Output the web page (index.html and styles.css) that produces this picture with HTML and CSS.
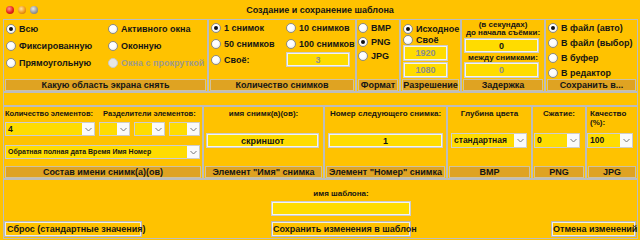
FILE: index.html
```html
<!DOCTYPE html>
<html lang="ru">
<head>
  <meta charset="UTF-8">
  <title>Создание и сохранение шаблона</title>
  <link rel="stylesheet" href="styles.css">
</head>
<body>
  <div class="titlebar">
    <div class="lights">
      <span class="light red"></span>
      <span class="light amber"></span>
      <span class="light grey"></span>
    </div>
    <div class="title">Создание и сохранение шаблона</div>
  </div>

  <!-- верхний ряд: что снимать -->
  <div class="row">
    <div class="box area">
      <div class="body">
        <label class="opt"><span class="radio on"></span>Всю</label>
        <label class="opt"><span class="radio"></span>Активного окна</label>
        <label class="opt"><span class="radio"></span>Фиксированную</label>
        <label class="opt"><span class="radio"></span>Оконную</label>
        <label class="opt"><span class="radio"></span>Прямоугольную</label>
        <label class="opt off"><span class="radio"></span>Окна с прокруткой</label>
      </div>
      <div class="cap">Какую область экрана снять</div>
    </div>

    <div class="box count">
      <div class="body">
        <label class="opt"><span class="radio on"></span>1 снимок</label>
        <label class="opt"><span class="radio"></span>10 снимков</label>
        <label class="opt"><span class="radio"></span>50 снимков</label>
        <label class="opt"><span class="radio"></span>100 снимков</label>
        <label class="opt"><span class="radio"></span>Своё:</label>
        <div class="field dim count-in">3</div>
      </div>
      <div class="cap">Количество снимков</div>
    </div>

    <div class="box fmt">
      <div class="body">
        <label class="opt"><span class="radio"></span>BMP</label>
        <label class="opt"><span class="radio on"></span>PNG</label>
        <label class="opt"><span class="radio"></span>JPG</label>
      </div>
      <div class="cap">Формат</div>
    </div>

    <div class="box res">
      <div class="body">
        <label class="opt"><span class="radio on"></span>Исходное</label>
        <label class="opt"><span class="radio"></span>Своё</label>
        <div class="field dim">1920</div>
        <div class="field dim">1080</div>
      </div>
      <div class="cap">Разрешение</div>
    </div>

    <div class="box delay">
      <div class="body">
        <div class="note">(в секундах)</div>
        <div class="note">до начала съёмки:</div>
        <div class="field first">0</div>
        <div class="note between">между снимками:</div>
        <div class="field dim">0</div>
      </div>
      <div class="cap">Задержка</div>
    </div>

    <div class="box save">
      <div class="body">
        <label class="opt"><span class="radio on"></span>В файл (авто)</label>
        <label class="opt"><span class="radio"></span>В файл (выбор)</label>
        <label class="opt"><span class="radio"></span>В буфер</label>
        <label class="opt"><span class="radio"></span>В редактор</label>
      </div>
      <div class="cap">Сохранить в...</div>
    </div>
  </div>

  <div class="band"></div>

  <!-- нижний ряд: имя файла и параметры форматов -->
  <div class="row">
    <div class="box compose">
      <div class="body">
        <div class="lblrow">
          <span class="lbl-count">Количество элементов:</span>
          <span>Разделители элементов:</span>
        </div>
        <div class="selrow">
          <div class="sel big"><span class="v">4</span><span class="a"><svg width="7" height="5" viewBox="0 0 7 5"><polyline points="0.5,1 3.5,4 6.5,1" fill="none" stroke="#777" stroke-width="1"/></svg></span></div>
          <div class="sel small"><span class="v"></span><span class="a"><svg width="7" height="5" viewBox="0 0 7 5"><polyline points="0.5,1 3.5,4 6.5,1" fill="none" stroke="#777" stroke-width="1"/></svg></span></div>
          <div class="sel small"><span class="v"></span><span class="a"><svg width="7" height="5" viewBox="0 0 7 5"><polyline points="0.5,1 3.5,4 6.5,1" fill="none" stroke="#777" stroke-width="1"/></svg></span></div>
          <div class="sel small"><span class="v"></span><span class="a"><svg width="7" height="5" viewBox="0 0 7 5"><polyline points="0.5,1 3.5,4 6.5,1" fill="none" stroke="#777" stroke-width="1"/></svg></span></div>
        </div>
        <div class="sel order"><span class="v">Обратная полная дата Время Имя Номер</span><span class="a"><svg width="7" height="5" viewBox="0 0 7 5"><polyline points="0.5,1 3.5,4 6.5,1" fill="none" stroke="#777" stroke-width="1"/></svg></span></div>
      </div>
      <div class="cap">Состав имени снимк(а)(ов)</div>
    </div>

    <div class="box nm">
      <div class="body">
        <div class="lbl">имя снимк(а)(ов):</div>
        <div class="field">скриншот</div>
      </div>
      <div class="cap">Элемент "Имя" снимка</div>
    </div>

    <div class="box num">
      <div class="body">
        <div class="lbl">Номер следующего снимка:</div>
        <div class="field">1</div>
      </div>
      <div class="cap">Элемент "Номер" снимка</div>
    </div>

    <div class="box bmp">
      <div class="body">
        <div class="lbl">Глубина цвета</div>
        <div class="sel"><span class="v">стандартная</span><span class="a"><svg width="7" height="5" viewBox="0 0 7 5"><polyline points="0.5,1 3.5,4 6.5,1" fill="none" stroke="#777" stroke-width="1"/></svg></span></div>
      </div>
      <div class="cap">BMP</div>
    </div>

    <div class="box png">
      <div class="body">
        <div class="lbl">Сжатие:</div>
        <div class="sel"><span class="v">0</span><span class="a"><svg width="7" height="5" viewBox="0 0 7 5"><polyline points="0.5,1 3.5,4 6.5,1" fill="none" stroke="#777" stroke-width="1"/></svg></span></div>
      </div>
      <div class="cap">PNG</div>
    </div>

    <div class="box jpg">
      <div class="body">
        <div class="lbl">Качество<br>(%):</div>
        <div class="sel"><span class="v">100</span><span class="a"><svg width="7" height="5" viewBox="0 0 7 5"><polyline points="0.5,1 3.5,4 6.5,1" fill="none" stroke="#777" stroke-width="1"/></svg></span></div>
      </div>
      <div class="cap">JPG</div>
    </div>
  </div>

  <!-- имя шаблона и кнопки -->
  <div class="bottom">
    <div class="tpl-label">имя шаблона:</div>
    <div class="field tpl-in"></div>
    <button class="btn reset">Сброс (стандартные значения)</button>
    <button class="btn apply">Сохранить изменения в шаблон</button>
    <button class="btn cancel">Отмена изменений</button>
  </div>
</body>
</html>
```

FILE: styles.css
```css
* { box-sizing: border-box; }
body { margin: 0; width: 640px; height: 240px; overflow: hidden; background: #ffc200; color: #151515; font: bold 9px "Liberation Sans", Arial, sans-serif; }

/* заголовок окна */
.titlebar { height: 19px; display: grid; grid-template-columns: 1fr auto 1fr; align-items: center; }
.lights { display: flex; gap: 4px; padding-left: 6px; }
.light { width: 8px; height: 8px; border-radius: 50%; }
.red { background: radial-gradient(circle at 40% 35%, #ff9a90, #e3231d 55%, #a51010); }
.amber { background: radial-gradient(circle at 40% 35%, #ffe0a0, #f09a1c 55%, #b06010); }
.grey { background: radial-gradient(circle at 40% 35%, #e8e8e8, #9a9a9a 55%, #6a6a6a); }
.title { font-size: 9px; }

/* панели */
.row { display: flex; margin-left: 3px; width: 635px; height: 73px; }
.box { display: flex; flex-direction: column; border: 1px solid #bdbdbd; }
.body { flex: 1; min-height: 0; }
.cap { height: 12px; margin: 0 1px; background: #dfa322; border: 1px solid #cfc2a0; text-align: center; line-height: 10px; white-space: nowrap; overflow: hidden; }
.band { margin-left: 3px; width: 635px; height: 14px; border: 1px solid #bdbdbd; }

.area { width: 205px; }
.count { width: 148px; }
.fmt { width: 44px; }
.res { width: 61px; }
.delay { width: 84px; }
.save { width: 93px; }
.compose { width: 200px; }
.nm { width: 121px; }
.num { width: 123px; }
.bmp { width: 85px; }
.png { width: 54px; }
.jpg { width: 52px; }

/* переключатели */
.opt { display: flex; align-items: center; white-space: nowrap; }
.radio { flex: none; position: relative; width: 10px; height: 10px; margin-right: 3px; border: 1px solid #8a8a8a; border-radius: 50%; background: radial-gradient(circle at 40% 35%, #fff 40%, #e2e2e2); }
.radio.on::after { content: ""; position: absolute; left: 2px; top: 2px; width: 4px; height: 4px; border-radius: 50%; background: #111; }
.opt.off { color: #a09a8a; }
.opt.off .radio { border-color: #cacaca; background: #e6e6e6; }

.area .body { display: grid; grid-template-columns: 102px 1fr; grid-auto-rows: 17px; padding-left: 2px; }
.count .body { display: grid; grid-template-columns: 75px 1fr; grid-auto-rows: 16px; padding-left: 2px; }
.count-in { width: 64px; height: 16px; }
.fmt .body { display: grid; grid-auto-rows: 14px; padding: 1px 0 0 1px; }
.res .body { display: grid; grid-auto-rows: 11px 11px 16px 16px; padding: 3px 0 0 2px; }
.res .field { width: 45px; height: 16px; }
.res .field + .field { margin-top: 1px; }
.save .body { display: grid; grid-auto-rows: 15px; padding-left: 2px; }

.delay .body { padding-top: 1px; }
.note { font-size: 8px; line-height: 8px; text-align: center; white-space: nowrap; }
.note.between { line-height: 9px; }
.delay .field { width: 75px; height: 16px; margin-left: 2px; }
.delay .field.first { height: 15px; margin-top: 1px; }

/* поля ввода */
.field { display: flex; align-items: center; justify-content: center; height: 15px; background: #ffdc00; border: 1px solid #cdcdcd; box-shadow: inset 0 0 0 1px #f3f3f3; white-space: nowrap; }
.field.dim { color: #8c8c8c; }

.sel { display: flex; height: 15px; border: 1px solid #cdcdcd; background: #fff; }
.sel .v { flex: 1; background: #ffdc00; padding-left: 2px; font-size: 8.5px; line-height: 13px; white-space: nowrap; overflow: hidden; }
.sel .a { width: 12px; display: flex; align-items: center; justify-content: center; background: #fafafa; }

/* состав имени */
.compose .body { padding: 3px 0 0 1px; }
.lblrow { display: flex; font-size: 7.5px; line-height: 8px; white-space: nowrap; }
.lbl-count { width: 98px; }
.selrow { display: flex; gap: 4px; margin-top: 4px; }
.selrow .sel { height: 14px; }
.sel.big { width: 90px; }
.sel.small { width: 31px; }
.sel.order { width: 195px; height: 14px; margin-top: 9px; }
.sel.order .v { font-size: 7px; line-height: 12px; }

.nm .body, .num .body, .bmp .body, .png .body, .jpg .body { padding-top: 2px; }
.lbl { height: 24px; font-size: 8px; line-height: 10px; text-align: center; white-space: nowrap; }
.nm .field { width: 113px; margin-left: 2px; }
.num .field { width: 115px; margin-left: 3px; }
.bmp .sel { width: 76px; margin-left: 3px; }
.png .sel { width: 46px; margin-left: 1px; }
.jpg .sel { width: 46px; }
.jpg .lbl { text-align: left; padding-left: 3px; line-height: 9px; }

/* низ окна */
.bottom { margin-left: 3px; width: 635px; height: 60px; border: 1px solid #bdbdbd; display: grid; grid-template-columns: 267px 140px 1fr; align-content: start; padding-top: 10px; }
.tpl-label { grid-column: 2; font-size: 8px; line-height: 8px; text-align: center; }
.tpl-in { grid-column: 2; margin-top: 3px; }
.btn { height: 16px; margin-top: 5px; padding: 0 1px; background: #ffc200; color: #151515; border: 1px solid #b9b9b9; box-shadow: inset 0 0 0 1px #ececec; font: bold 9px "Liberation Sans", Arial, sans-serif; white-space: nowrap; }
.reset { grid-column: 1; justify-self: start; width: 138px; text-align: left; padding-left: 2px; }
.apply { grid-column: 2; }
.cancel { grid-column: 3; justify-self: end; width: 85px; margin-right: 1px; }
```
